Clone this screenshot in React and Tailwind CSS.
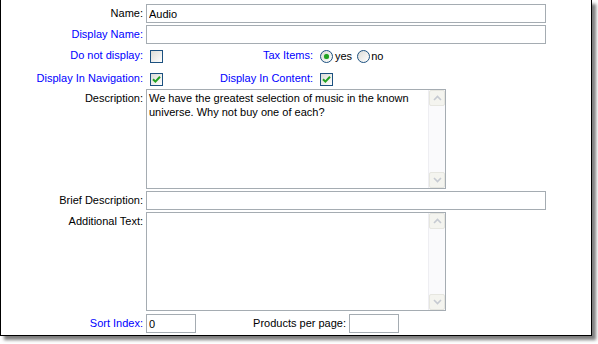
import React from 'react';

const font = { fontFamily: '"Liberation Sans", Arial, sans-serif' };

const Label = ({ children, blue, className = '' }) => (
    <div className={`text-[11px] leading-[13px] text-right pt-[3px] whitespace-nowrap ${blue ? 'text-[#0000ff]' : 'text-black'} ${className}`}>
        {children}
    </div>
);

const Checkbox = ({ checked }) => (
    <div className="w-[13px] h-[13px] border border-[#1c5180] bg-gradient-to-br from-[#dcdcd7] to-white flex items-center justify-center">
        {checked && (
            <svg width="9" height="9" viewBox="0 0 9 9">
                <path d="M1 4.2 L3.4 6.6 L8 1.8" fill="none" stroke="#21a121" strokeWidth="2" />
            </svg>
        )}
    </div>
);

const Radio = ({ checked }) => (
    <div className="w-[13px] h-[13px] rounded-full border border-[#1c5180] bg-gradient-to-br from-[#dcdcd7] to-white flex items-center justify-center">
        {checked && <div className="w-[5px] h-[5px] rounded-full bg-[#21a121] shadow-[0_0_1px_#5fd05f]" />}
    </div>
);

const Arrow = ({ down }) => (
    <div className="h-[16px] border border-[#e6e6e0] rounded-[2px] bg-[#f4f4ef] flex items-center justify-center">
        <svg width="9" height="6" viewBox="0 0 9 6">
            <path d={down ? 'M1 1 L4.5 4.5 L8 1' : 'M1 5 L4.5 1.5 L8 5'} fill="none" stroke="#c6cad2" strokeWidth="1.6" />
        </svg>
    </div>
);

const TextArea = ({ h = 'h-[100px]', children }) => (
    <div className={`w-[300px] ${h} border border-[#a5acb2] bg-white flex`}>
        <div className="flex-1 px-[2px] pt-[1px] text-[11px] leading-[14px] text-black">{children}</div>
        <div className="w-[17px] flex flex-col justify-between bg-[#fafafc] border-l border-[#eeeef2]">
            <Arrow />
            <Arrow down />
        </div>
    </div>
);

const Field = ({ w, value = '' }) => (
    <input
        readOnly
        value={value}
        style={font}
        className={`block ${w} h-[19px] border border-[#a5acb2] px-[2px] text-[11px] text-black bg-white outline-none`}
    />
);

export default function App() {
    return (
        <div className="bg-white w-[598px] h-[344px]" style={font}>
            <div className="w-[592px] h-[336px] border-l border-r border-b border-black bg-white shadow-[4px_4px_3px_rgba(0,0,0,0.5)] pt-[4px] flex flex-col">
                <div className="flex shrink-0 gap-[3px]">
                    <Label className="w-[142px]">Name:</Label>
                    <Field w="w-[400px]" value="Audio" />
                </div>
                <div className="flex shrink-0 gap-[3px] mt-[2px]">
                    <Label blue className="w-[142px]">Display Name:</Label>
                    <Field w="w-[400px]" />
                </div>
                <div className="flex shrink-0 gap-[3px] mt-[2px] h-[21px]">
                    <Label blue className="w-[142px]">Do not display:</Label>
                    <div className="flex items-start">
                        <div className="ml-[4px] mt-[4px]"><Checkbox /></div>
                        <Label blue className="w-[150px]">Tax Items:</Label>
                        <div className="ml-[7px] mt-[4px] flex items-center text-[11px] leading-[13px] text-black">
                            <Radio checked />
                            <span className="ml-[2px] mr-[5px]">yes</span>
                            <Radio />
                            <span className="ml-[1px]">no</span>
                        </div>
                    </div>
                </div>
                <div className="flex shrink-0 gap-[3px] mt-[2px] h-[18px]">
                    <Label blue className="w-[142px]">Display In Navigation:</Label>
                    <div className="flex items-start">
                        <div className="ml-[4px] mt-[4px]"><Checkbox checked /></div>
                        <Label blue className="w-[150px]">Display In Content:</Label>
                        <div className="ml-[7px] mt-[4px]"><Checkbox checked /></div>
                    </div>
                </div>
                <div className="flex shrink-0 gap-[3px] mt-[2px]">
                    <Label className="w-[142px]">Description:</Label>
                    <TextArea>
                        We have the greatest selection of music in the known
                        <br />
                        universe. Why not buy one of each?
                    </TextArea>
                </div>
                <div className="flex shrink-0 gap-[3px] mt-[2px]">
                    <Label className="w-[142px]">Brief Description:</Label>
                    <Field w="w-[400px]" />
                </div>
                <div className="flex shrink-0 gap-[3px] mt-[2px]">
                    <Label className="w-[142px]">Additional Text:</Label>
                    <TextArea h="h-[99px]" />
                </div>
                <div className="flex shrink-0 gap-[3px] mt-[3px]">
                    <Label blue className="w-[142px]">Sort Index:</Label>
                    <div className="flex">
                        <Field w="w-[50px]" value="0" />
                        <Label className="w-[150px]">Products per page:</Label>
                        <div className="ml-[3px] flex"><Field w="w-[50px]" /></div>
                    </div>
                </div>
            </div>
        </div>
    );
}
